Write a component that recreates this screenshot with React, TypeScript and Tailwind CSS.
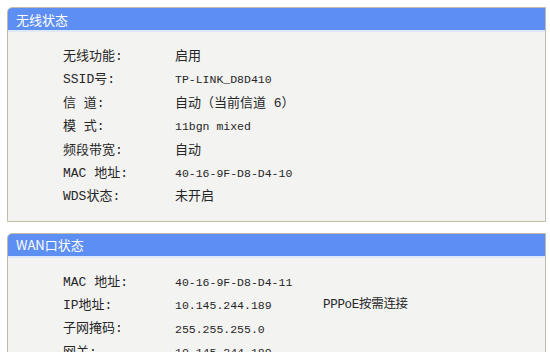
const mono = { fontFamily: '"Liberation Mono", "Noto Sans CJK SC", monospace' };

type Row = { label: string; value: string; extra?: string };

const wireless: Row[] = [
  { label: '无线功能:', value: '启用' },
  { label: 'SSID号:', value: 'TP-LINK_D8D410' },
  { label: '信 道:', value: '自动（当前信道 6）' },
  { label: '模 式:', value: '11bgn mixed' },
  { label: '频段带宽:', value: '自动' },
  { label: 'MAC 地址:', value: '40-16-9F-D8-D4-10' },
  { label: 'WDS状态:', value: '未开启' },
];

const wan: Row[] = [
  { label: 'MAC 地址:', value: '40-16-9F-D8-D4-11' },
  { label: 'IP地址:', value: '10.145.244.189', extra: 'PPPoE按需连接' },
  { label: '子网掩码:', value: '255.255.255.0' },
  { label: '网关:', value: '10.145.244.189' },
];

// values that start with Chinese text render bigger than the mono ones
const isCjk = (s: string) => /^[\u4e00-\u9fff]/.test(s);

function Panel({ title, rows }: { title: string; rows: Row[] }) {
  return (
    <div className="ml-[7px] w-[539px] border border-[#c3bba9] rounded-tl-[5px] overflow-hidden bg-[#f3f3f2]">
      <div className="h-[24px] bg-[#5d8ef1] border-b-[2px] border-[#dfe8f8] flex items-center pl-[8px] text-white text-[13px] leading-none font-['Noto_Sans_CJK_SC',sans-serif]">
        {title}
      </div>
      <div className="pt-[13px] pb-[12px]">
        {rows.map((r, i) => (
          <div key={i} className="h-[23.4px] flex items-center text-[#262626] text-[13px]" style={mono}>
            <div className="w-[112px] ml-[55px] whitespace-pre">{r.label}</div>
            <div className={isCjk(r.value) ? 'w-[148px] text-[13px] whitespace-pre' : 'w-[148px] text-[11.5px] whitespace-pre'}>
              {r.value}
            </div>
            {r.extra && <div className="text-[12.5px] tracking-[-0.3px]">{r.extra}</div>}
          </div>
        ))}
      </div>
    </div>
  );
}

export default function App() {
  return (
    <div className="w-[550px] h-[352px] bg-white overflow-hidden pt-[7px]">
      <Panel title="无线状态" rows={wireless} />
      <div className="h-[11px]" />
      <Panel title="WAN口状态" rows={wan} />
    </div>
  );
}
